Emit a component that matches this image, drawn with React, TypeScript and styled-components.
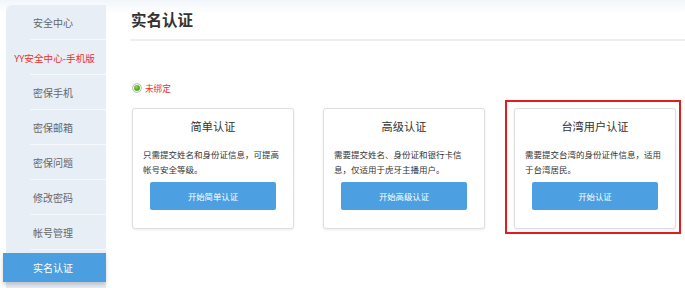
import React from "react";
import styled, { createGlobalStyle } from "styled-components";

const Global = createGlobalStyle`
  html, body { margin: 0; padding: 0; background: #fff; }
  body {
    font-family: "Noto Sans CJK SC", "Noto Sans", sans-serif;
    width: 685px; height: 288px; overflow: hidden;
    background: linear-gradient(#f2f6fb 0px, #ffffff 14px);
  }
`;

const Page = styled.div`
  display: flex;
  align-items: flex-start;
  height: 288px;
`;

const Sidebar = styled.nav`
  margin: 5px 0 0 6px;
  width: 100px;
  height: 283px;
  background: #e8eef6;
  border-radius: 6px 0 0 0;
  display: flex;
  flex-direction: column;
`;

const NavItem = styled.div<{ $active?: boolean; $red?: boolean }>`
  position: relative;
  height: ${(p) => (p.$active ? 29 : 35)}px;
  margin: ${(p) => (p.$active ? "3px 0 3px -3px" : "0")};
  padding-right: ${(p) => (p.$active ? 3 : 6)}px;
  padding-left: ${(p) => (p.$red ? 3 : 0)}px;
  display: flex;
  align-items: center;
  justify-content: center;
  font-size: ${(p) => (p.$red ? 9.6 : 10)}px;
  color: ${(p) => (p.$active ? "#fff" : p.$red ? "#e8322c" : "#666")};
  background: ${(p) => (p.$active ? "#4b9ee0" : "transparent")};
  box-shadow: ${(p) => (p.$active ? "0 3px 4px rgba(0,0,0,0.18)" : "none")};
  white-space: nowrap;
  &::after {
    content: "";
    display: ${(p) => (p.$active ? "none" : "block")};
    position: absolute;
    left: 24px;
    right: 0;
    bottom: 0;
    height: 1px;
    background: #f6f8fb;
  }
`;

const Main = styled.main`
  flex: 1;
  margin-left: 24px;
  display: flex;
  flex-direction: column;
`;

const Header = styled.div`
  height: 39px;
  border-bottom: 2px solid #eeeff1;
  display: flex;
  align-items: center;
  padding-left: 1px;
`;

const Title = styled.h1`
  margin: 0;
  font-size: 15.5px;
  font-weight: 700;
  color: #333;
  line-height: 1;
`;

const Status = styled.div`
  margin-top: 41px;
  height: 12px;
  display: flex;
  align-items: center;
  gap: 3px;
  padding-left: 2px;
  font-size: 8.6px;
  color: #e8322c;
`;

const Radio = styled.span`
  width: 10px;
  height: 10px;
  border-radius: 50%;
  box-sizing: border-box;
  border: 1px solid #c2c2c2;
  background: radial-gradient(circle at 42% 38%, #9ad866 0, #52b01f 2.6px);
  box-shadow: inset 0 0 0 1px #fff;
`;

const Cards = styled.div`
  margin-top: 14px;
  padding-left: 2px;
  display: flex;
  gap: 29px;
`;

const Highlight = styled.div`
  position: relative;
  &::before {
    content: "";
    position: absolute;
    left: -9px;
    top: -8px;
    right: -5px;
    bottom: -5px;
    border: 2px solid #e01c1c;
    pointer-events: none;
  }
`;

const Card = styled.div`
  width: 162px;
  height: 121px;
  box-sizing: border-box;
  background: #fff;
  border: 1px solid #dedede;
  border-radius: 3px;
  box-shadow: 0 1px 3px rgba(0, 0, 0, 0.08);
  padding: 10px 10px 0 10px;
  display: flex;
  flex-direction: column;
`;

const CardTitle = styled.div`
  font-size: 11.2px;
  line-height: 14px;
  color: #333;
  text-align: center;
`;

const Desc = styled.p`
  margin: 14px 0 0 0;
  font-size: 8.5px;
  line-height: 15px;
  height: 30px;
  color: #333;
  white-space: nowrap;
`;

const Button = styled.button`
  margin: 5px auto 0;
  width: 126px;
  height: 28px;
  border: none;
  border-radius: 2px;
  background: #4ca0e2;
  color: #fff;
  font-family: inherit;
  font-size: 8.4px;
  padding: 0;
  cursor: pointer;
`;

const navItems = ["安全中心", "YY安全中心-手机版", "密保手机", "密保邮箱", "密保问题", "修改密码", "帐号管理", "实名认证"];

const cards = [
  { title: "简单认证", lines: ["只需提交姓名和身份证信息，可提高", "帐号安全等级。"], btn: "开始简单认证" },
  { title: "高级认证", lines: ["需要提交姓名、身份证和银行卡信", "息，仅适用于虎牙主播用户。"], btn: "开始高级认证" },
  { title: "台湾用户认证", lines: ["需要提交台湾的身份证件信息，适用", "于台湾居民。"], btn: "开始认证" },
];

function CardView({ c }: { c: (typeof cards)[number] }) {
  return (
    <Card>
      <CardTitle>{c.title}</CardTitle>
      <Desc>
        {c.lines[0]}
        <br />
        {c.lines[1]}
      </Desc>
      <Button>{c.btn}</Button>
    </Card>
  );
}

export default function App() {
  return (
    <>
      <Global />
      <Page>
        <Sidebar>
          {navItems.map((t, i) => (
            <NavItem key={t} $red={i === 1} $active={i === navItems.length - 1}>
              {t}
            </NavItem>
          ))}
        </Sidebar>
        <Main>
          <Header>
            <Title>实名认证</Title>
          </Header>
          <Status>
            <Radio />
            未绑定
          </Status>
          <Cards>
            <CardView c={cards[0]} />
            <CardView c={cards[1]} />
            <Highlight>
              <CardView c={cards[2]} />
            </Highlight>
          </Cards>
        </Main>
      </Page>
    </>
  );
}
